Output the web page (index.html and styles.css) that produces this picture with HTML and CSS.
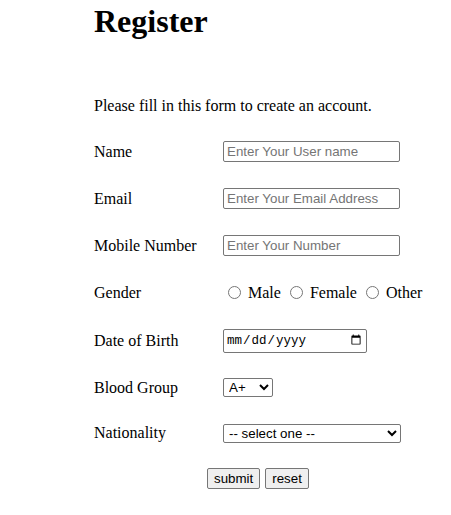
FILE: index.html
```html
<!DOCTYPE html>
<html lang="en">
<head>
<meta charset="utf-8">
<title>Register</title>
<link rel="stylesheet" href="styles.css">
</head>
<body>
<div class="page">
  <h1 class="title">Register</h1>
  <p class="intro">Please fill in this form to create an account.</p>
  <form class="form">
    <div class="grid">
      <label class="lbl" for="name">Name</label>
      <div class="field"><input id="name" class="text" type="text" placeholder="Enter Your User name"></div>

      <label class="lbl" for="email">Email</label>
      <div class="field"><input id="email" class="text" type="email" placeholder="Enter Your Email Address"></div>

      <label class="lbl" for="mobile">Mobile Number</label>
      <div class="field"><input id="mobile" class="text" type="text" placeholder="Enter Your Number"></div>

      <span class="lbl">Gender</span>
      <div class="field radios"><input class="radio" type="radio" name="g"> Male <input class="radio" type="radio" name="g"> Female <input class="radio" type="radio" name="g"> Other</div>

      <label class="lbl" for="dob">Date of Birth</label>
      <div class="field"><input id="dob" class="date" type="date"></div>

      <label class="lbl" for="blood">Blood Group</label>
      <div class="field">
        <select id="blood" class="sel sel-small">
          <option>A+</option><option>A-</option><option>B+</option><option>B-</option>
          <option>O+</option><option>O-</option><option>AB+</option><option>AB-</option>
        </select>
      </div>

      <label class="lbl" for="nat">Nationality</label>
      <div class="field">
        <select id="nat" class="sel sel-wide">
          <option>-- select one --</option>
        </select>
      </div>
    </div>
    <div class="actions">
      <button class="btn" type="submit">submit</button>
      <button class="btn" type="reset">reset</button>
    </div>
  </form>
</div>
</body>
</html>
```

FILE: styles.css
```css
html, body {
  margin: 0;
  padding: 0;
  background: #ffffff;
}

body {
  font-family: "Liberation Serif", "Times New Roman", serif;
  font-size: 16px;
  color: #000000;
}

.page {
  padding-left: 94px;
}

.title {
  margin: 3px 0 0;
  font-size: 32px;
  line-height: 36px;
  font-weight: bold;
}

.intro {
  margin: 58px 0 13px;
  line-height: 18px;
}

.form {
  margin: 0;
}

.grid {
  display: grid;
  grid-template-columns: 129px auto;
  grid-template-rows: 47px 47px 47px 47px 49px 45px 46px;
  align-items: center;
}

.lbl {
  line-height: 18px;
}

.field {
  display: flex;
  align-items: center;
}

.radios {
  display: block;
  line-height: 18px;
  white-space: nowrap;
}

.radio {
  width: 13px;
  height: 13px;
  margin: 3px 3px 0 5px;
  vertical-align: -1px;
}

.text {
  box-sizing: border-box;
  width: 177px;
  height: 21px;
  padding: 1px 3px;
  border: 1px solid #767676;
  border-radius: 2px;
  font-family: "Liberation Sans", Arial, sans-serif;
  font-size: 13.333px;
  color: #000;
}

.text::placeholder {
  color: #757575;
}

.date {
  box-sizing: border-box;
  width: 144px;
  height: 24px;
  padding: 1px 2px;
  border: 1px solid #767676;
  border-radius: 2px;
  font-family: "Liberation Mono", "Courier New", monospace;
  font-size: 12.5px;
}

.sel {
  box-sizing: border-box;
  height: 19px;
  padding: 0 0 0 1px;
  border: 1px solid #767676;
  border-radius: 2px;
  font-family: "Liberation Sans", Arial, sans-serif;
  font-size: 13.333px;
  color: #000;
  background: #ffffff;
}

.sel-small {
  width: 50px;
}

.sel-wide {
  width: 178px;
}

.actions {
  display: flex;
  align-items: center;
  gap: 5px;
  height: 45px;
  padding-left: 113px;
}

.btn {
  box-sizing: border-box;
  height: 21px;
  padding: 1px 6px;
  border: 1px solid #767676;
  border-radius: 2px;
  background: #efefef;
  font-family: "Liberation Sans", Arial, sans-serif;
  font-size: 13.333px;
  color: #000;
}
```
